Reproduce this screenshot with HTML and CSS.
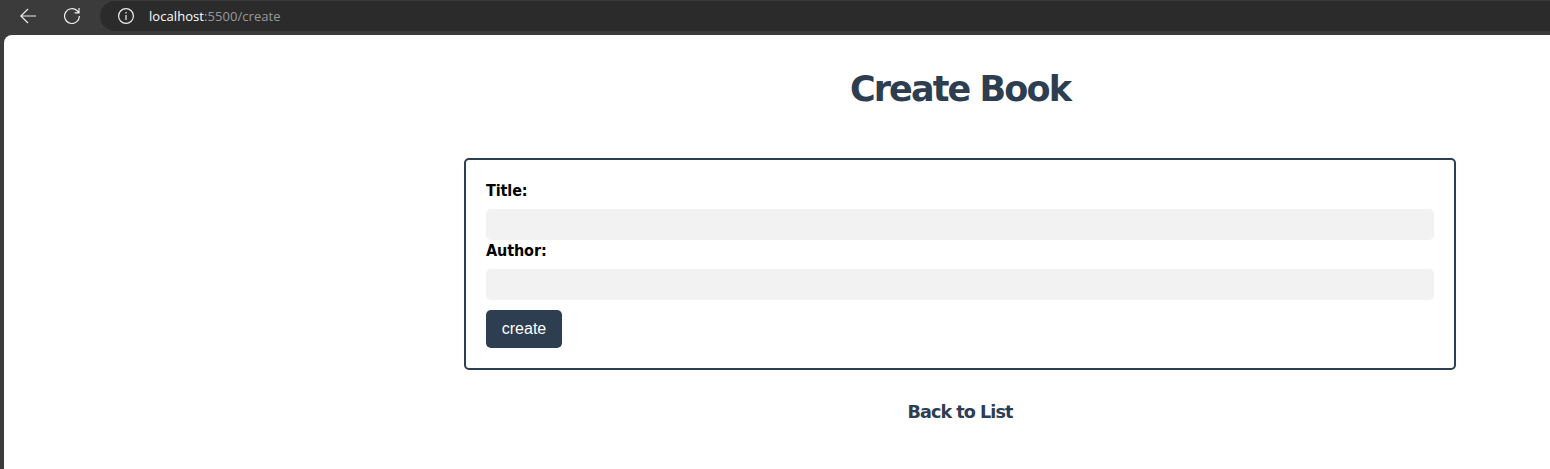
FILE: index.html
```html
<!DOCTYPE html>
<html lang="en">
<head>
<meta charset="utf-8">
<title>Create Book</title>
<link rel="stylesheet" href="styles.css">
</head>
<body>
<div class="toolbar">
  <svg class="icon back" viewBox="0 0 16 16"><path d="M8 1 .8 8 8 15M.8 8H16"/></svg>
  <svg class="icon reload" viewBox="0 0 16 16"><path d="M15.4 8A7.4 7.4 0 1 1 13.2 2.8L15 4.8M15 0V4.8H10.6"/></svg>
  <div class="address">
    <svg class="icon" viewBox="0 0 16 16"><circle cx="8" cy="8" r="7.4"/><path d="M8 7v5M8 4v1.5"/></svg>
    <span class="url"><b>localhost</b>:5500/create</span>
  </div>
</div>
<main class="page">
  <h1>Create Book</h1>
  <form class="book-form">
    <label for="title">Title:</label>
    <input id="title" type="text">
    <label for="author">Author:</label>
    <input id="author" type="text">
    <button type="button">create</button>
  </form>
  <a class="back-link">Back to List</a>
</main>
</body>
</html>
```

FILE: styles.css
```css
* { box-sizing: border-box; }
body {
  margin: 0;
  height: 469px;
  overflow: hidden;
  background: #3b3b3b;
  font-family: "DejaVu Sans", sans-serif;
}
.toolbar {
  height: 35px;
  padding: 1px 0 4px 20px;
  display: flex;
  align-items: center;
}
.icon {
  width: 16px;
  height: 16px;
  flex: none;
  fill: none;
  stroke: #eee;
  stroke-width: 1.2;
}
.reload { margin-left: 28px; }
.address {
  flex: 1;
  height: 30px;
  margin-left: 20px;
  padding-left: 18px;
  display: flex;
  align-items: center;
  gap: 15px;
  background: #2b2b2b;
  border-radius: 15px 0 0 15px;
}
.url {
  font: 13px/18px "Open Sans", sans-serif;
  letter-spacing: .06px;
  color: #999;
}
.url b { font-weight: 400; color: #fff; }
.page {
  height: 434px;
  margin-left: 4px;
  padding: 32px 94px 0 460px;
  background: #fff;
  border-top-left-radius: 8px;
  display: flex;
  flex-direction: column;
  align-items: center;
}
h1 {
  margin: 0 0 47px;
  font-size: 35px;
  line-height: 44px;
  letter-spacing: -1.9px;
  color: #2c3e50;
}
.book-form {
  width: 992px;
  height: 212px;
  padding: 20px;
  border: 2px solid #2c3e50;
  border-radius: 5px;
}
label {
  display: block;
  height: 19px;
  margin-bottom: 10px;
  font-family: "DejaVu Sans Condensed", "DejaVu Sans", sans-serif;
  font-stretch: condensed;
  font-size: 16px;
  line-height: 21px;
  font-weight: 700;
  letter-spacing: -.1px;
}
input {
  display: block;
  width: 100%;
  height: 31px;
  border: 0;
  border-radius: 5px;
  background: #f2f2f2;
}
button {
  display: block;
  width: 76px;
  height: 38px;
  margin-top: 10px;
  padding: 0;
  border: 0;
  border-radius: 5px;
  background: #2c3e50;
  color: #fff;
  font: 16px "Liberation Sans", Arial, sans-serif;
}
.back-link {
  margin-top: 31px;
  font-size: 17.6px;
  line-height: 22px;
  font-weight: 700;
  letter-spacing: -.95px;
  color: #2c3e50;
}
```
